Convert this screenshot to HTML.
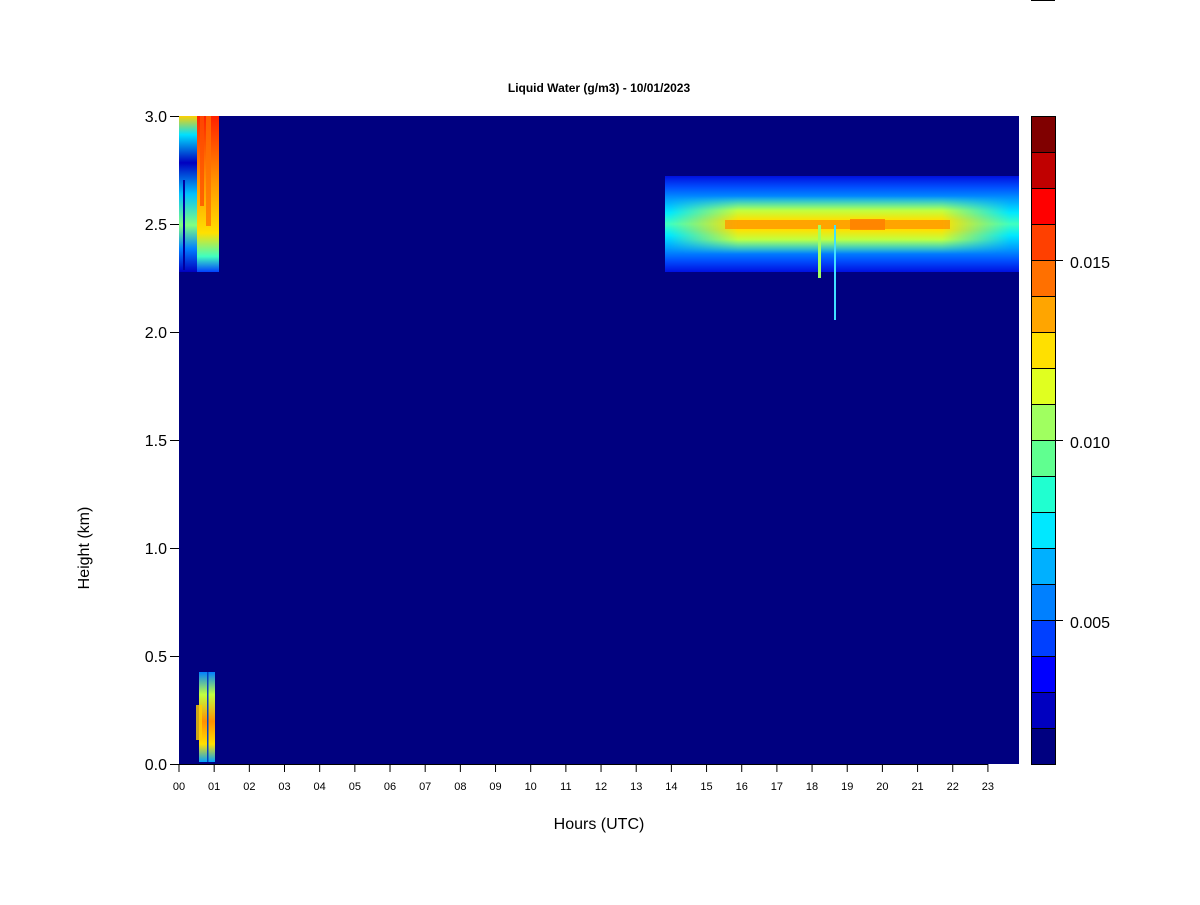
<!DOCTYPE html>
<html><head><meta charset="utf-8"><style>
body{margin:0;background:#fff;width:1200px;height:900px;overflow:hidden}
svg text{font-family:"Liberation Sans",sans-serif}
</style></head><body>
<svg width="1200" height="900" xmlns="http://www.w3.org/2000/svg">
<defs>
<linearGradient id="bandY" x1="0" y1="0" x2="0" y2="1">
<stop offset="0" stop-color="#0010e0"/><stop offset="0.12" stop-color="#0050ff"/>
<stop offset="0.25" stop-color="#00a0ff"/><stop offset="0.38" stop-color="#00e8ff"/>
<stop offset="0.5" stop-color="#40ffc0"/>
<stop offset="0.62" stop-color="#00e8ff"/><stop offset="0.75" stop-color="#00a0ff"/>
<stop offset="0.88" stop-color="#0050ff"/><stop offset="1" stop-color="#0010e0"/>
</linearGradient>
<linearGradient id="coreY" x1="0" y1="0" x2="0" y2="1">
<stop offset="0" stop-color="#80ff80" stop-opacity="0"/>
<stop offset="0.25" stop-color="#c0ff40"/>
<stop offset="0.42" stop-color="#ffe000"/><stop offset="0.58" stop-color="#ffe000"/>
<stop offset="0.75" stop-color="#c0ff40"/>
<stop offset="1" stop-color="#80ff80" stop-opacity="0"/>
</linearGradient>
<linearGradient id="mx" x1="0" y1="0" x2="1" y2="0">
<stop offset="0" stop-color="#fff" stop-opacity="0"/>
<stop offset="0.2" stop-color="#fff" stop-opacity="1"/>
<stop offset="0.8" stop-color="#fff" stop-opacity="1"/>
<stop offset="1" stop-color="#fff" stop-opacity="0"/>
</linearGradient>
<mask id="m1"><rect x="670" y="196" width="340" height="58" fill="url(#mx)"/></mask>
<linearGradient id="tlY" x1="0" y1="0" x2="0" y2="1">
<stop offset="0" stop-color="#ffd000"/><stop offset="0.12" stop-color="#00e0ff"/>
<stop offset="0.3" stop-color="#0000c0"/><stop offset="0.5" stop-color="#00c0ff"/>
<stop offset="0.7" stop-color="#80ff80"/><stop offset="0.85" stop-color="#0080ff"/>
<stop offset="1" stop-color="#0000c0"/>
</linearGradient>
<linearGradient id="tlCore" x1="0" y1="0" x2="0" y2="1">
<stop offset="0" stop-color="#ff2000"/><stop offset="0.4" stop-color="#ff9000"/>
<stop offset="0.75" stop-color="#ffe000"/><stop offset="0.9" stop-color="#40ffc0"/>
<stop offset="1" stop-color="#0040ff"/>
</linearGradient>
<linearGradient id="blY" x1="0" y1="0" x2="0" y2="1">
<stop offset="0" stop-color="#0080ff"/><stop offset="0.25" stop-color="#c0ff40"/>
<stop offset="0.55" stop-color="#ff9000"/><stop offset="0.8" stop-color="#ffe000"/>
<stop offset="1" stop-color="#00a0ff"/>
</linearGradient>
</defs>
<text x="599" y="92" font-size="12" font-weight="bold" text-anchor="middle">Liquid Water (g/m3) - 10/01/2023</text>
<rect x="179" y="116" width="840" height="648" fill="#000080"/>
<rect x="179" y="116" width="40" height="156" fill="url(#tlY)"/>
<rect x="183" y="180" width="2" height="90" fill="#0000a0"/>
<rect x="197" y="116" width="22" height="156" fill="url(#tlCore)"/>
<rect x="200" y="116" width="4" height="90" fill="#ff5000" opacity="0.8"/>
<rect x="206" y="116" width="5" height="110" fill="#ff7000" opacity="0.8"/>
<rect x="665" y="176" width="354" height="96" fill="url(#bandY)"/>
<rect x="670" y="196" width="340" height="58" fill="url(#coreY)" mask="url(#m1)"/>
<rect x="725" y="220" width="225" height="9" fill="#ff9000" opacity="0.75"/>
<rect x="850" y="219" width="35" height="11" fill="#ff8000" opacity="0.85"/>
<rect x="818" y="225" width="3" height="53" fill="#a0ff60"/>
<rect x="834" y="225" width="2" height="95" fill="#40e0ff"/>
<rect x="199" y="672" width="16" height="90" fill="url(#blY)"/>
<rect x="196" y="705" width="6" height="35" fill="#ffd000" opacity="0.8"/>
<rect x="207" y="672" width="1.5" height="90" fill="#0040c0"/>
<g stroke="#000" stroke-width="1">
<line x1="179" y1="764.5" x2="988" y2="764.5"/>
<line x1="170" y1="116.5" x2="179" y2="116.5"/>
<line x1="170" y1="224.5" x2="179" y2="224.5"/>
<line x1="170" y1="332.5" x2="179" y2="332.5"/>
<line x1="170" y1="440.5" x2="179" y2="440.5"/>
<line x1="170" y1="548.5" x2="179" y2="548.5"/>
<line x1="170" y1="656.5" x2="179" y2="656.5"/>
<line x1="170" y1="764.5" x2="179" y2="764.5"/>
</g>
<g id="xt" stroke="#000"></g>
<g font-size="16" text-anchor="end">
<text x="167" y="122">3.0</text><text x="167" y="230">2.5</text><text x="167" y="338">2.0</text>
<text x="167" y="446">1.5</text><text x="167" y="554">1.0</text><text x="167" y="662">0.5</text>
<text x="167" y="770">0.0</text>
</g>
<g id="xl" font-size="11" text-anchor="middle"></g>
<text x="599" y="829" font-size="16" text-anchor="middle">Hours (UTC)</text>
<text transform="translate(89,548) rotate(-90)" font-size="16" text-anchor="middle">Height (km)</text>
<g id="cb" stroke="#000" stroke-width="1"></g>
<g stroke="#000"><line x1="1055" y1="260.5" x2="1063" y2="260.5"/><line x1="1055" y1="440.5" x2="1063" y2="440.5"/><line x1="1055" y1="620.5" x2="1063" y2="620.5"/></g>
<g font-size="16"><text x="1070" y="268">0.015</text><text x="1070" y="448">0.010</text><text x="1070" y="628">0.005</text></g>
<rect x="1031" y="0" width="24" height="1" fill="#000"/>
</svg>
<script>
var ns="http://www.w3.org/2000/svg";
var xt=document.getElementById('xt'),xl=document.getElementById('xl');
for(var i=0;i<24;i++){var x=179+i*35.17;
var l=document.createElementNS(ns,'line');l.setAttribute('x1',x);l.setAttribute('x2',x);l.setAttribute('y1',764);l.setAttribute('y2',772);xt.appendChild(l);
var t=document.createElementNS(ns,'text');t.setAttribute('x',x);t.setAttribute('y',790);t.textContent=(i<10?'0':'')+i;xl.appendChild(t);}
var c=["#800000","#c00000","#ff0000","#ff4000","#ff7000","#ffa500","#ffe000","#e0ff20","#a0ff60","#60ff90","#20ffd0","#00e8ff","#00b0ff","#0080ff","#0040ff","#0000ff","#0000c0","#000080"];
var cb=document.getElementById('cb');
for(var i=0;i<18;i++){var r=document.createElementNS(ns,'rect');r.setAttribute('x',1031.5);r.setAttribute('y',116.5+i*36);r.setAttribute('width',24);r.setAttribute('height',36);r.setAttribute('fill',c[i]);cb.appendChild(r);}
</script>
</body></html>
